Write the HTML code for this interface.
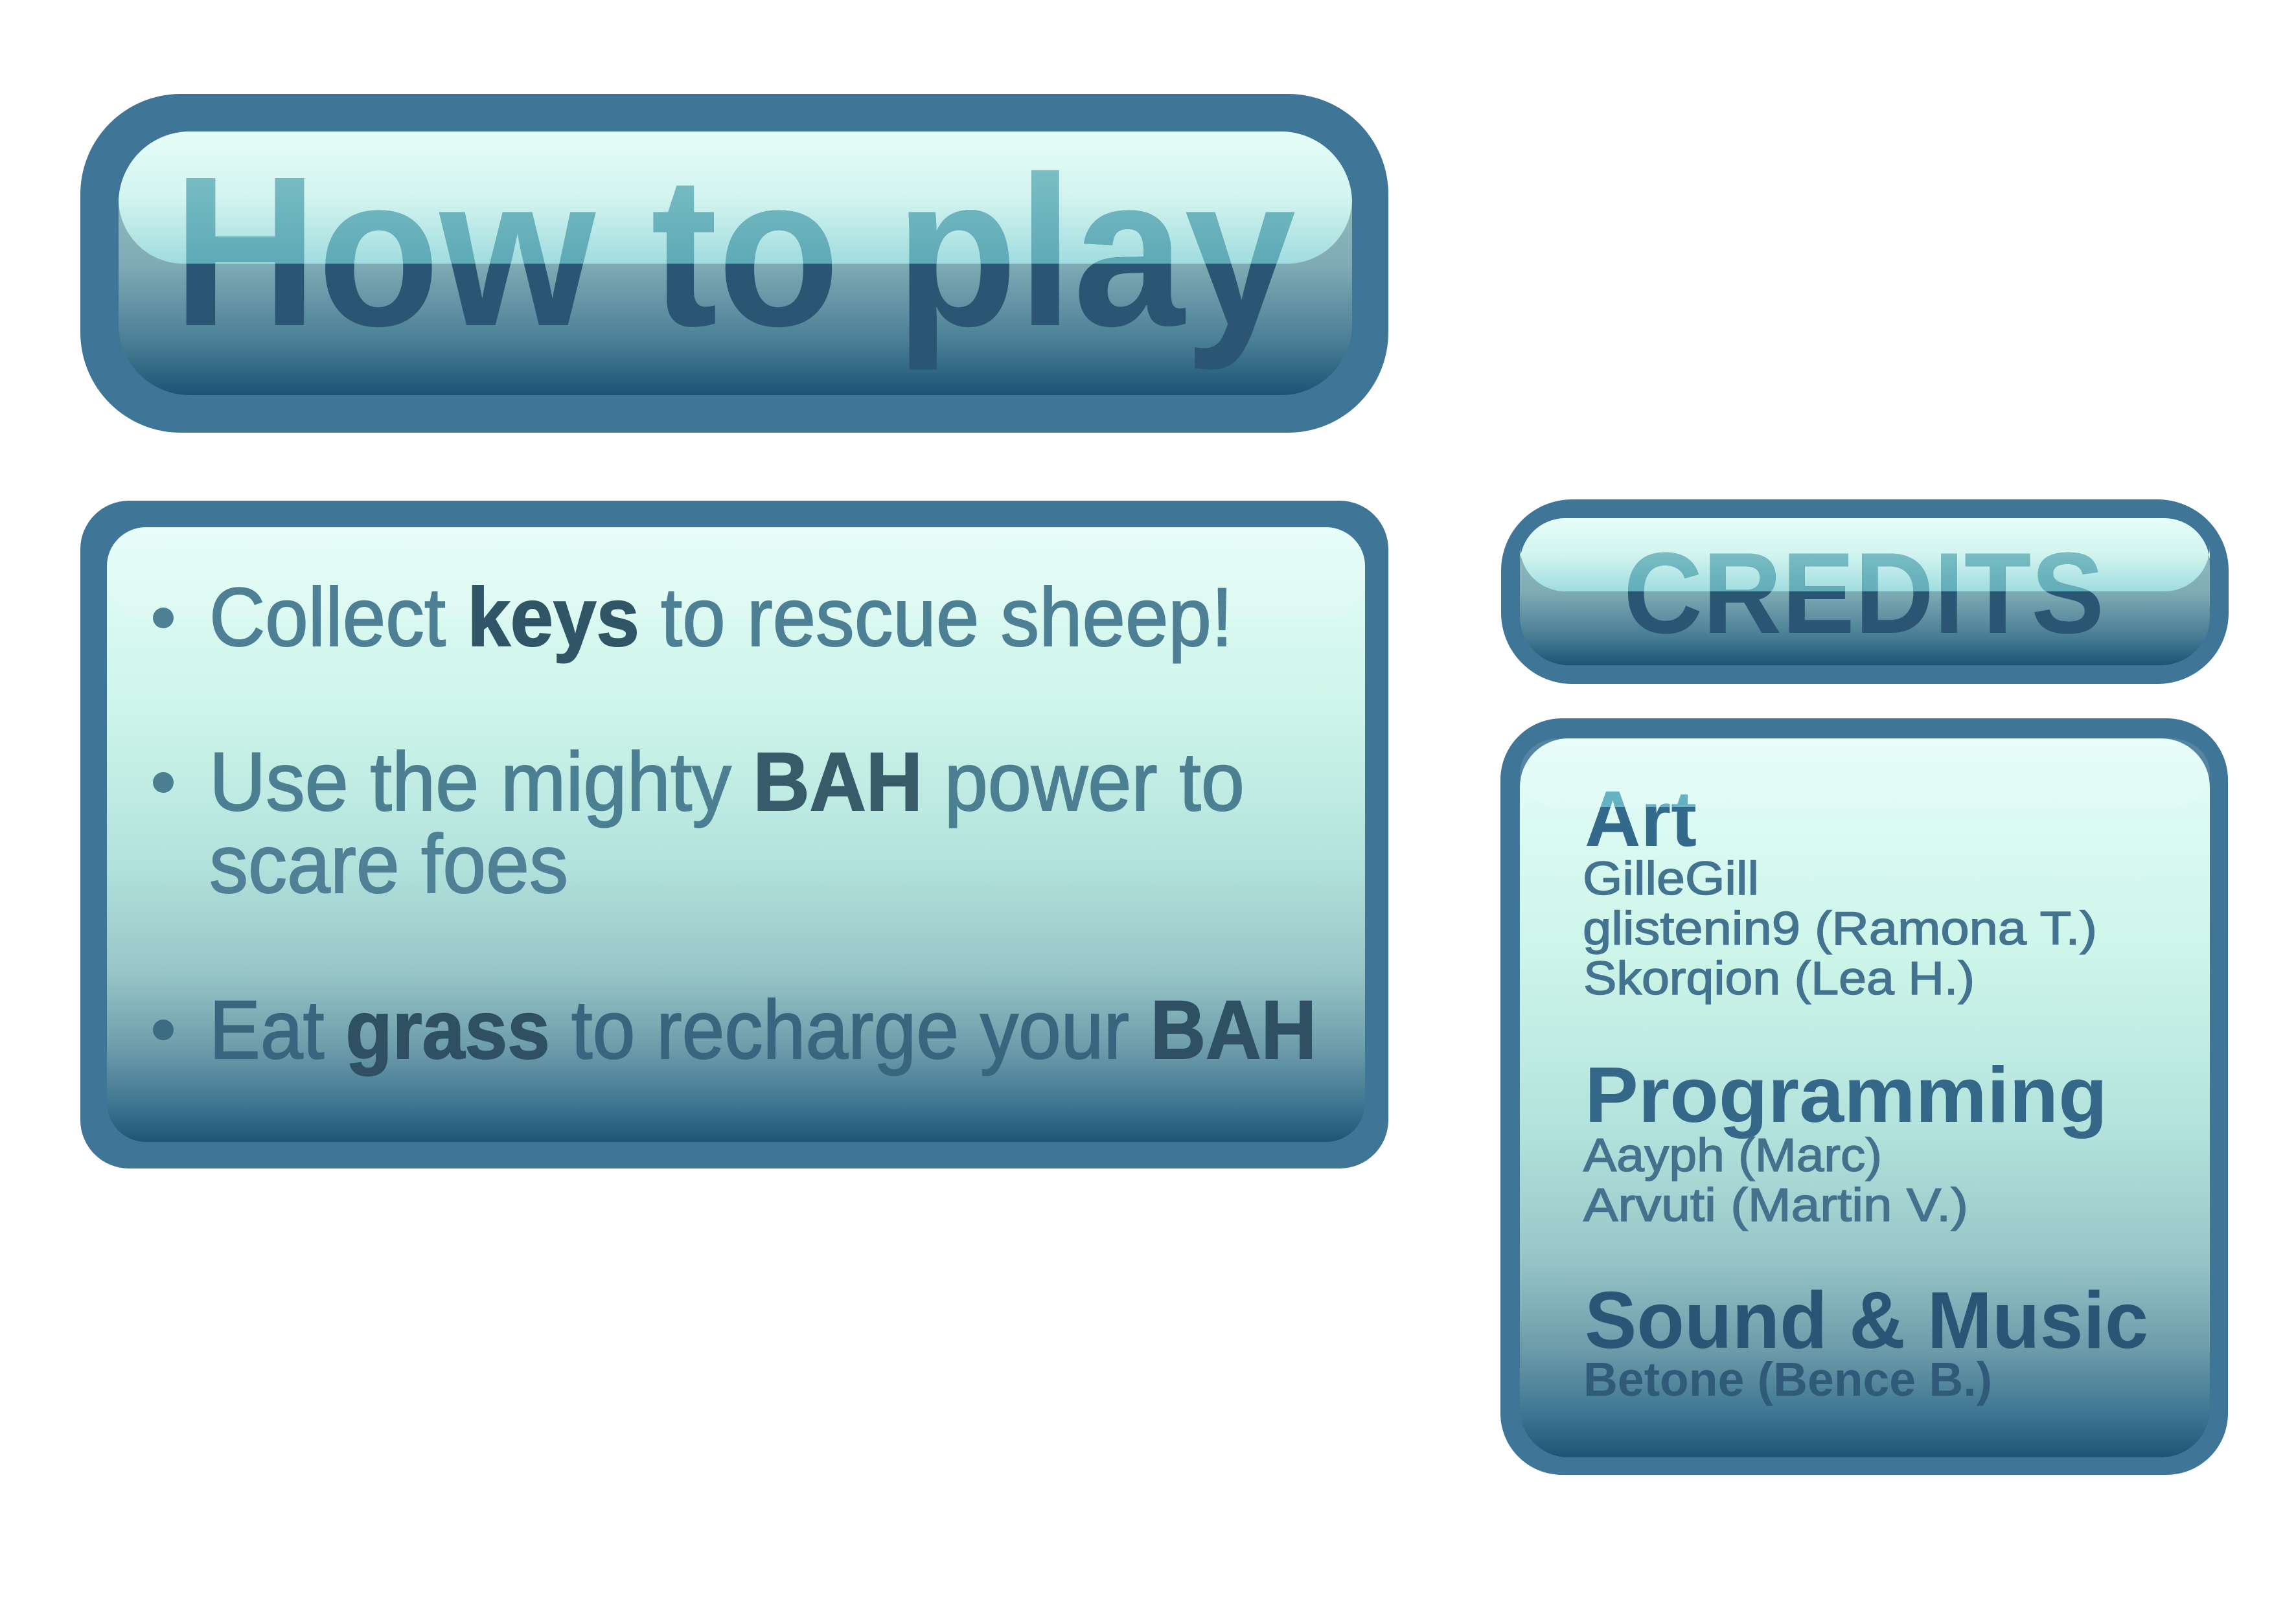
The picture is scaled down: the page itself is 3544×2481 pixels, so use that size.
<!DOCTYPE html>
<html><head><meta charset="utf-8"><style>
html,body{margin:0;padding:0;background:#fff;}
svg{display:block;}
text{font-family:"Liberation Sans",sans-serif;}
</style></head><body>
<svg width="3544" height="2481" viewBox="0 0 3544 2481" xmlns="http://www.w3.org/2000/svg">
<defs>
<linearGradient id="btn" x1="0" y1="0" x2="0" y2="1">
<stop offset="0" stop-color="#a3c7c9"/>
<stop offset="0.5" stop-color="#7fabb4"/>
<stop offset="0.8" stop-color="#4a7e96"/>
<stop offset="1" stop-color="#1d5375"/>
</linearGradient>
<linearGradient id="gloss" x1="0" y1="0" x2="0" y2="1">
<stop offset="0" stop-color="#e6fdf8"/>
<stop offset="0.5" stop-color="#d2f4ef"/>
<stop offset="1" stop-color="#a0dcdf"/>
</linearGradient>
<linearGradient id="glosstext" x1="0" y1="0" x2="0" y2="1">
<stop offset="0" stop-color="#86c6c8"/>
<stop offset="1" stop-color="#3d93a9"/>
</linearGradient>
<linearGradient id="body" x1="0" y1="0" x2="0" y2="1">
<stop offset="0" stop-color="#e4fdf8"/>
<stop offset="0.3" stop-color="#cdf5e9"/>
<stop offset="0.55" stop-color="#b2e2dc"/>
<stop offset="0.72" stop-color="#98c6c8"/>
<stop offset="0.85" stop-color="#6c9caa"/>
<stop offset="0.94" stop-color="#3f7592"/>
<stop offset="1" stop-color="#1e5576"/>
</linearGradient>
<clipPath id="g1"><path d="M293,203 H1977 A110,110 0 0 1 2087,313 V307 A100,100 0 0 1 1987,407 H283 A100,100 0 0 1 183,307 V313 A110,110 0 0 1 293,203 Z"/></clipPath>
<clipPath id="g2"><path d="M2416,800 H3341 A70,70 0 0 1 3411,870 V843 A70,70 0 0 1 3341,913 H2416 A70,70 0 0 1 2346,843 V870 A70,70 0 0 1 2416,800 Z"/></clipPath>
<clipPath id="g3"><rect x="2346" y="1140" width="1065" height="106" rx="60"/></clipPath>
</defs>

<!-- How to play -->
<rect x="124" y="145" width="2019" height="523" rx="155" fill="#3f7597"/>
<rect x="183" y="203" width="1904" height="407" rx="110" fill="url(#btn)"/>
<path d="M293,203 H1977 A110,110 0 0 1 2087,313 V307 A100,100 0 0 1 1987,407 H283 A100,100 0 0 1 183,307 V313 A110,110 0 0 1 293,203 Z" fill="url(#gloss)"/>
<text x="267" y="502" font-size="330" font-weight="bold" fill="#2a5673" textLength="1733" lengthAdjust="spacingAndGlyphs">How to play</text>
<text x="267" y="502" font-size="330" font-weight="bold" fill="url(#glosstext)" textLength="1733" lengthAdjust="spacingAndGlyphs" clip-path="url(#g1)">How to play</text>

<!-- Instructions -->
<rect x="124" y="773" width="2019" height="1031" rx="75" fill="#3f7597"/>
<rect x="165" y="814" width="1942" height="949" rx="60" fill="url(#body)"/>
<rect x="165" y="814" width="1942" height="142" rx="60" fill="#ffffff" opacity="0.12"/>
<g font-size="128">
<circle cx="252" cy="954" r="16" fill="#4e8095"/>
<text x="323" y="997" fill="#4e8095" stroke="#4e8095" stroke-width="2" textLength="1580" lengthAdjust="spacingAndGlyphs">Collect <tspan font-weight="bold" fill="#2f5566" stroke="#2f5566">keys</tspan> to rescue sheep!</text>
<circle cx="252" cy="1208" r="16" fill="#4d7f93"/>
<text x="323" y="1251" fill="#4d7f93" stroke="#4d7f93" stroke-width="2" textLength="1598" lengthAdjust="spacingAndGlyphs">Use the mighty <tspan font-weight="bold" fill="#385b6a" stroke="#385b6a">BAH</tspan> power to</text>
<text x="323" y="1378" fill="#4f8095" stroke="#4f8095" stroke-width="2" textLength="554" lengthAdjust="spacingAndGlyphs">scare foes</text>
<circle cx="252" cy="1590" r="16" fill="#3c6c84"/>
<text x="323" y="1634" fill="#37667e" stroke="#37667e" stroke-width="2" textLength="1709" lengthAdjust="spacingAndGlyphs">Eat <tspan font-weight="bold" fill="#2e5062" stroke="#2e5062">grass</tspan> to recharge your <tspan font-weight="bold" fill="#2e5062" stroke="#2e5062">BAH</tspan></text>
</g>

<!-- Credits header -->
<rect x="2317" y="771" width="1123" height="285" rx="110" fill="#3f7597"/>
<rect x="2346" y="800" width="1065" height="227" rx="75" fill="url(#btn)"/>
<path d="M2416,800 H3341 A70,70 0 0 1 3411,870 V843 A70,70 0 0 1 3341,913 H2416 A70,70 0 0 1 2346,843 V870 A70,70 0 0 1 2416,800 Z" fill="url(#gloss)"/>
<text x="2506" y="977" font-size="178" font-weight="bold" fill="#2a5673" textLength="742" lengthAdjust="spacingAndGlyphs">CREDITS</text>
<text x="2506" y="977" font-size="178" font-weight="bold" fill="url(#glosstext)" textLength="742" lengthAdjust="spacingAndGlyphs" clip-path="url(#g2)">CREDITS</text>

<!-- Credits body -->
<rect x="2316" y="1109" width="1123" height="1168" rx="95" fill="#3f7597"/>
<rect x="2346" y="1140" width="1065" height="1110" rx="75" fill="url(#body)"/>
<rect x="2346" y="1140" width="1065" height="106" rx="60" fill="#ffffff" opacity="0.12"/>
<text x="2446" y="1306" font-size="122" font-weight="bold" fill="#336a8c" textLength="173" lengthAdjust="spacingAndGlyphs">Art</text>
<text x="2446" y="1306" font-size="122" font-weight="bold" fill="#64b2c2" textLength="173" lengthAdjust="spacingAndGlyphs" clip-path="url(#g3)">Art</text>
<g font-size="72" fill="#44738f" stroke="#44738f" stroke-width="1.5">
<text x="2443" y="1381" textLength="272" lengthAdjust="spacingAndGlyphs">GilleGill</text>
<text x="2443" y="1458" textLength="794" lengthAdjust="spacingAndGlyphs">glistenin9 (Ramona T.)</text>
<text x="2444" y="1535" textLength="604" lengthAdjust="spacingAndGlyphs">Skorqion (Lea H.)</text>
</g>
<text x="2446" y="1732" font-size="122" font-weight="bold" fill="#356788" textLength="807" lengthAdjust="spacingAndGlyphs">Programming</text>
<g font-size="72" fill="#44728d" stroke="#44728d" stroke-width="1.5">
<text x="2444" y="1808" textLength="461" lengthAdjust="spacingAndGlyphs">Aayph (Marc)</text>
<text x="2444" y="1885" textLength="594" lengthAdjust="spacingAndGlyphs">Arvuti (Martin V.)</text>
</g>
<text x="2446" y="2081" font-size="124" font-weight="bold" fill="#2b5574" textLength="870" lengthAdjust="spacingAndGlyphs">Sound &amp; Music</text>
<text x="2444" y="2155" font-size="74" font-weight="bold" fill="#2f5a78" textLength="631" lengthAdjust="spacingAndGlyphs">Betone (Bence B.)</text>
</svg>
</body></html>
